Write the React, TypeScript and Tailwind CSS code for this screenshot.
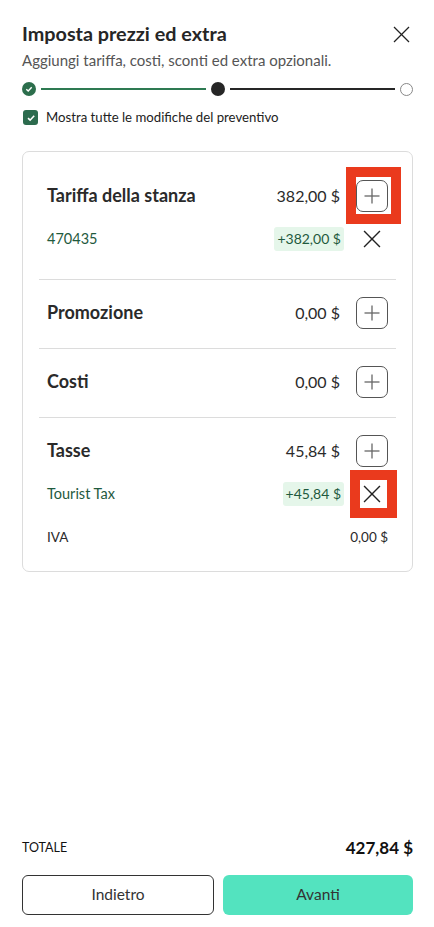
import React from "react";

const font = { fontFamily: "Lato, 'Noto Sans', sans-serif" };

function PlusBtn() {
  return (
    <div className="w-8 h-8 rounded-[7px] border border-[#555] flex items-center justify-center shrink-0">
      <svg width="18" height="18" viewBox="0 0 18 18">
        <line x1="9" y1="1.5" x2="9" y2="16.5" stroke="#666" strokeWidth="1.3" />
        <line x1="1.5" y1="9" x2="16.5" y2="9" stroke="#666" strokeWidth="1.3" />
      </svg>
    </div>
  );
}

function XIcon({ size = 17 }: { size?: number }) {
  return (
    <svg width={size} height={size} viewBox="0 0 17 17">
      <line x1="1" y1="1" x2="16" y2="16" stroke="#222" strokeWidth="1.3" />
      <line x1="16" y1="1" x2="1" y2="16" stroke="#222" strokeWidth="1.3" />
    </svg>
  );
}

function MainRow({ label, amount, boxed }: { label: string; amount: string; boxed?: boolean }) {
  return (
    <div className="h-8 flex items-center">
      <div className="flex-1 text-[18px] font-bold text-[#2a2a2a]">{label}</div>
      <div className="text-[16px] text-[#2a2a2a] mr-[16px]">{amount}</div>
      <div className="relative">
        <PlusBtn />
        {boxed && (
          <div className="absolute left-[-10px] top-[-13px] w-[55px] h-[57px] border-[10px] border-[#ea3a1d] pointer-events-none" />
        )}
      </div>
    </div>
  );
}

function SubRow({ label, amount, boxed }: { label: string; amount: string; boxed?: boolean }) {
  return (
    <div className="h-8 mt-[11px] flex items-center">
      <div className="flex-1 text-[14.5px] text-[#1f5a3e]">{label}</div>
      <div className="text-[14px] text-[#1f5a3e] bg-[#e5f6ea] rounded-[3px] px-[3px] h-6 flex items-center mr-3">
        {amount}
      </div>
      <div className="relative w-8 h-8 flex items-center justify-center">
        <XIcon size={18} />
        {boxed && (
          <div className="absolute left-[-6px] top-[-8px] w-[47px] h-[48px] border-[10px] border-[#ea3a1d] pointer-events-none" />
        )}
      </div>
    </div>
  );
}

export default function App() {
  return (
    <div className="h-[927px] w-full bg-white flex flex-col text-[#2a2a2a]" style={font}>
      <div className="pl-[22px] pr-[21px] pt-[20px]">
        <div className="flex items-start justify-between">
          <h1 className="text-[19.8px] font-bold text-[#262626] leading-[26px]">Imposta prezzi ed extra</h1>
          <div className="mt-[6px] mr-[3px]">
            <XIcon />
          </div>
        </div>
        <p className="text-[15px] text-[#555] mt-[3px] leading-[22px]">
          Aggiungi tariffa, costi, sconti ed extra opzionali.
        </p>

        <div className="flex items-center mt-[11px] h-[14px]">
          <div className="w-[14px] h-[14px] rounded-full bg-[#2c6e4c] flex items-center justify-center shrink-0">
            <svg width="8" height="8" viewBox="0 0 8 8">
              <path d="M1.3 4.2 L3.2 6 L6.7 2.2" fill="none" stroke="white" strokeWidth="1.4" />
            </svg>
          </div>
          <div className="flex-1 h-[2px] bg-[#2e7a52] mx-[5px]" />
          <div className="w-[14px] h-[14px] rounded-full bg-[#262626] shrink-0" />
          <div className="flex-1 h-[2px] bg-[#262626] mx-[5px]" />
          <div className="w-[13px] h-[13px] rounded-full border border-[#888] shrink-0" />
        </div>

        <div className="flex items-center mt-[12px]">
          <div className="w-[15px] h-[15px] rounded-[3px] bg-[#2c6b4e] flex items-center justify-center ml-[1px]">
            <svg width="10" height="10" viewBox="0 0 10 10">
              <path d="M2 5.2 L4.1 7.2 L8.2 2.8" fill="none" stroke="white" strokeWidth="1.6" />
            </svg>
          </div>
          <span className="ml-[8px] text-[13.2px] text-[#222]">Mostra tutte le modifiche del preventivo</span>
        </div>

        <div className="mt-[23px] border border-[#dcdcdc] rounded-[7px] px-4 pt-[11px]">
          <div className="px-2 pt-[17px] pb-[24px]">
            <MainRow label="Tariffa della stanza" amount="382,00 $" boxed />
            <SubRow label="470435" amount="+382,00 $" />
          </div>
          <div className="border-t border-[#dcdcdc] px-2 pt-[17px] pb-[19px]">
            <MainRow label="Promozione" amount="0,00 $" />
          </div>
          <div className="border-t border-[#dcdcdc] px-2 pt-[17px] pb-[19px]">
            <MainRow label="Costi" amount="0,00 $" />
          </div>
          <div className="border-t border-[#dcdcdc] px-2 pt-[17px] pb-[18px]">
            <MainRow label="Tasse" amount="45,84 $" />
            <SubRow label="Tourist Tax" amount="+45,84 $" boxed />
            <div className="h-8 mt-[11px] flex items-center justify-between text-[13.5px] text-[#2a2a2a]">
              <span>IVA</span>
              <span>0,00 $</span>
            </div>
          </div>
        </div>
      </div>

      <div className="flex-1" />

      <div className="pl-[22px] pr-[21px] pb-[12px]">
        <div className="flex items-center justify-between h-[22px]">
          <span className="text-[12.5px] text-[#111]">TOTALE</span>
          <span className="text-[17px] font-bold text-[#111]">427,84 $</span>
        </div>
        <div className="flex gap-[9px] mt-[16px]">
          <button className="flex-1 h-[40px] rounded-[6px] border border-[#333] bg-white text-[15.5px] text-[#333]">
            Indietro
          </button>
          <button className="flex-1 h-[40px] rounded-[6px] bg-[#53e3bf] text-[15.5px] text-[#333]">
            Avanti
          </button>
        </div>
      </div>
    </div>
  );
}
